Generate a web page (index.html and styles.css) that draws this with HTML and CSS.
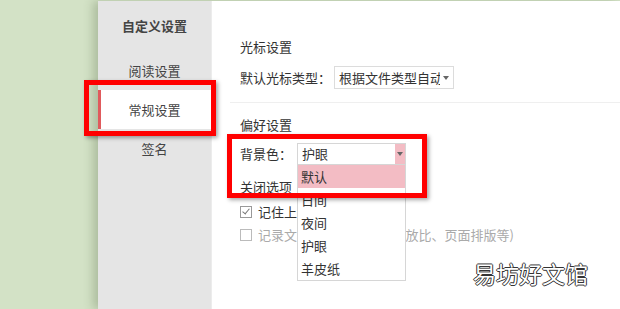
FILE: index.html
```html
<!DOCTYPE html>
<html lang="zh-CN">
<head>
    <meta charset="UTF-8">
    <meta name="viewport" content="width=device-width, initial-scale=1.0">
    <title>自定义设置</title>
    <link rel="stylesheet" href="styles.css">
</head>
<body>
    <div class="window">
        <div class="sidebar">
            <div class="side-title">自定义设置</div>
            <div class="side-item">阅读设置</div>
            <div class="side-item active">常规设置</div>
            <div class="side-item">签名</div>
        </div>

        <div class="main">
            <div class="section-title first">光标设置</div>
            <div class="row">
                <span class="label cursor-label">默认光标类型：</span>
                <div class="select cursor-select">
                    <span class="select-text">根据文件类型自动选择</span>
                    <span class="arrow"></span>
                </div>
            </div>

            <div class="divider"></div>

            <div class="section-title">偏好设置</div>
            <div class="row">
                <span class="label bg-label">背景色：</span>
                <div class="select bg-select open">
                    <span class="select-text">护眼</span>
                    <span class="arrow"></span>
                    <ul class="options">
                        <li class="hover">默认</li>
                        <li>日间</li>
                        <li>夜间</li>
                        <li>护眼</li>
                        <li>羊皮纸</li>
                    </ul>
                </div>
            </div>

            <div class="section-title close-title">关闭选项</div>
            <label class="check">
                <span class="box checked"></span>
                记住上次打开的文档
            </label>
            <label class="check disabled">
                <span class="box"></span>
                记录文档上次显示状态(缩放比、页面排版等)
            </label>
        </div>
    </div>

    <div class="mark mark-side"></div>
    <div class="mark mark-bg"></div>
    <div class="watermark">易坊好文馆</div>
</body>
</html>
```

FILE: styles.css
```css
body {
    margin: 0;
    height: 309px;
    overflow: hidden;
    background-color: #d3e2c6;
    font-family: "Noto Sans CJK SC", "Liberation Sans", sans-serif;
    font-size: 13px;
    color: #333;
}
.window {
    display: flex;
    margin: 1px 0 0 98px;
    height: 308px;
    box-shadow: -5px 0 9px rgba(60, 80, 40, 0.25);
}
.sidebar {
    width: 113px;
    background-color: #e5e5e5;
    border-right: 1px solid #ececec;
    color: #444;
}
.side-title {
    height: 50px;
    line-height: 50px;
    text-align: center;
    font-weight: bold;
}
.side-item {
    height: 39px;
    line-height: 39px;
    text-align: center;
}
.side-item.active {
    background-color: #fff;
    box-shadow: inset 3px 0 0 #e05a5c;
}
.main {
    flex: 1;
    background-color: #fff;
    padding-left: 18px;
}
.section-title {
    line-height: 20px;
    margin-left: 10px;
    margin-top: 12px;
}
.section-title.first {
    margin-top: 36px;
}
.row {
    display: flex;
    align-items: center;
    margin-left: 10px;
    margin-top: 8px;
}
.section-title.first + .row {
    margin-top: 9px;
}
.label {
    line-height: 20px;
}
.cursor-label {
    width: 94px;
}
.bg-label {
    width: 57px;
}
.select {
    position: relative;
    box-sizing: border-box;
    border: 1px solid #dcdcdc;
    display: flex;
    align-items: center;
    background-color: #fff;
}
.cursor-select {
    width: 120px;
    height: 23px;
}
.bg-select {
    width: 109px;
    height: 22px;
    border-color: #d6d6d6;
}
.select-text {
    padding-left: 4px;
    white-space: nowrap;
    overflow: hidden;
    width: 103px;
    line-height: 20px;
}
.bg-select .select-text {
    width: 94px;
}
.arrow {
    margin-left: auto;
    width: 10px;
    height: 100%;
    display: flex;
    align-items: center;
    justify-content: center;
}
.arrow::after {
    content: "";
    border-left: 3px solid transparent;
    border-right: 3px solid transparent;
    border-top: 4px solid #666;
}
.cursor-select .arrow {
    width: 12px;
    margin-right: 1px;
}
.bg-select .arrow {
    background-color: #f3bcc4;
}
.options {
    position: absolute;
    top: 21px;
    left: -1px;
    width: 109px;
    box-sizing: border-box;
    margin: 0;
    padding: 0;
    list-style: none;
    background-color: #fff;
    border: 1px solid #d6d6d6;
    border-top: none;
    z-index: 2;
}
.options li {
    height: 23px;
    line-height: 23px;
    padding-left: 3px;
}
.options li.hover {
    background-color: #f3bcc4;
}
.divider {
    height: 1px;
    background-color: #efefef;
    margin-top: 13px;
}
.close-title {
    margin-top: 12px;
}
.check {
    display: flex;
    align-items: center;
    margin-left: 10px;
    line-height: 20px;
    white-space: nowrap;
}
.check:first-of-type {
    margin-top: 5px;
}
.check + .check {
    margin-top: 3px;
}
.check.disabled {
    color: #aaa;
}
.box {
    position: relative;
    width: 10px;
    height: 10px;
    border: 1px solid #999;
    margin-right: 6px;
    background-color: #fff;
}
.check.disabled .box {
    border-color: #bbb;
}
.box.checked::after {
    content: "";
    position: absolute;
    left: 3px;
    top: 0;
    width: 3px;
    height: 6px;
    border-right: 1.5px solid #777;
    border-bottom: 1.5px solid #777;
    transform: rotate(40deg);
}
.mark {
    position: absolute;
    box-sizing: border-box;
    border: 5px solid #f00;
    box-shadow: 2px 2px 4px rgba(0, 0, 0, 0.35);
    z-index: 5;
}
.mark-side {
    left: 84px;
    top: 80px;
    width: 132px;
    height: 56px;
}
.mark-bg {
    left: 227px;
    top: 134px;
    width: 200px;
    height: 64px;
}
.watermark {
    position: absolute;
    left: 473px;
    top: 258px;
    font-size: 23px;
    line-height: 30px;
    color: #fff;
    text-shadow: 1px 0 0 #333, -1px 0 0 #333, 0 1px 0 #333, 0 -1px 0 #333;
    z-index: 6;
}
```
